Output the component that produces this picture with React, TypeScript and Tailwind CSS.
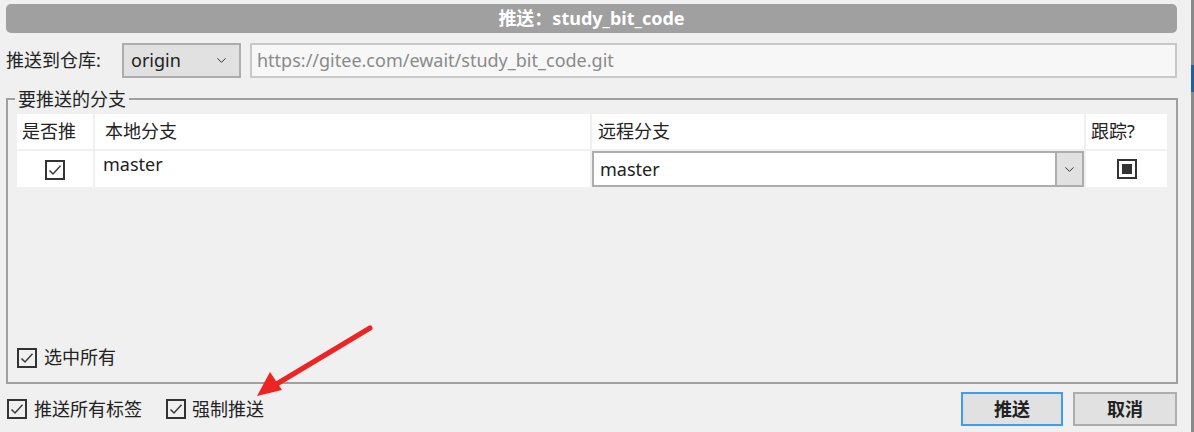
import { ChevronDown } from "lucide-react";

const FONT = "font-['Noto_Sans','Noto_Sans_CJK_SC',sans-serif]";

function CheckBox() {
  return (
    <span className="flex h-[20px] w-[20px] shrink-0 items-center justify-center border-2 border-[#333333]">
      <svg width="14" height="14" viewBox="0 0 14 14" fill="none">
        <path d="M1.5 7.5 L5 11 L12.5 2.8" stroke="#3a3a3a" strokeWidth="1.5" />
      </svg>
    </span>
  );
}

function TrackBox() {
  return (
    <span className="flex h-[20px] w-[20px] items-center justify-center border-2 border-[#333333] bg-white">
      <span className="h-[10px] w-[10px] bg-[#333333]" />
    </span>
  );
}

export default function App() {
  return (
    <div className={`relative flex h-[432px] w-[1194px] overflow-hidden bg-[#f0f0f0] text-[18px] text-[#222222] ${FONT}`}>
      <div className="flex w-[1191px] flex-col pl-[6px] pr-[14px] pt-[4px]">
        {/* title */}
        <div className="flex h-[29px] items-center justify-center rounded-[5px] bg-[#a0a0a0] text-[18px] font-bold text-white">
          推送：study_bit_code
        </div>

        {/* remote row */}
        <div className="mt-[9px] flex h-[36px] items-center">
          <span className="w-[116px] leading-none">推送到仓库:</span>
          <div className="flex h-[35px] w-[119px] items-center justify-between border-2 border-[#adadad] bg-[#e1e1e1] pl-[7px] pr-[10px]">
            <span>origin</span>
            <ChevronDown size={15} strokeWidth={1.6} className="text-[#333]" />
          </div>
          <div className="ml-[9px] flex h-[35px] flex-1 items-center border-2 border-[#c8c8c8] bg-[#f7f7f7] pl-[5px] text-[#8a8a8a]">
            https://gitee.com/ewait/study_bit_code.git
          </div>
        </div>

        {/* branches group */}
        <fieldset className="mt-[9px] mr-[-1px] border-2 border-[#a0a0a0] px-[9px]">
          <legend className="ml-[-2px] px-[3px] leading-[24px]">要推送的分支</legend>
          <div className="flex h-[271px] flex-col pb-[11px]">
            <div className="mt-[3px] grid grid-cols-[76px_495px_492px_81px] gap-x-[2px] gap-y-[2px] bg-[#f0f0f0]">
              <div className="flex h-[35px] items-center bg-white pl-[5px]">是否推</div>
              <div className="flex h-[35px] items-center bg-white pl-[10px]">本地分支</div>
              <div className="flex h-[35px] items-center bg-white pl-[6px]">远程分支</div>
              <div className="flex h-[35px] items-center bg-white pl-[5px]">跟踪?</div>

              <div className="flex h-[36px] items-center justify-center bg-white pt-[2px]">
                <CheckBox />
              </div>
              <div className="h-[36px] bg-white pl-[8px] pt-[3px] leading-[20px]">master</div>
              <div className="flex h-[36px] border-2 border-[#adadad] bg-white">
                <span className="flex flex-1 items-center pl-[6px]">master</span>
                <span className="flex w-[27px] items-center justify-center border-l-2 border-[#adadad] bg-[#e1e1e1]">
                  <ChevronDown size={15} strokeWidth={1.6} className="text-[#333]" />
                </span>
              </div>
              <div className="flex h-[36px] items-center justify-center bg-white">
                <TrackBox />
              </div>
            </div>
            <div className="flex-1" />
            <label className="flex items-center gap-[7px]">
              <CheckBox />
              <span>选中所有</span>
            </label>
          </div>
        </fieldset>

        {/* bottom row */}
        <div className="mt-[8px] flex items-center">
          <label className="flex items-center gap-[7px] pl-[1px]">
            <CheckBox />
            <span>推送所有标签</span>
          </label>
          <label className="ml-[24px] flex items-center gap-[6px]">
            <CheckBox />
            <span>强制推送</span>
          </label>
          <div className="flex-1" />
          <button className="flex h-[34px] w-[102px] items-center justify-center border-2 border-[#3c9cf6] bg-[#e1e1e1] font-bold">
            推送
          </button>
          <button className="ml-[10px] flex h-[34px] w-[104px] items-center justify-center border-2 border-[#adadad] bg-[#e1e1e1] font-bold">
            取消
          </button>
        </div>
      </div>

      {/* window edge */}
      <div className="flex w-[3px] flex-col bg-[#8a8a8a]">
        <div className="mt-[65px] h-[27px] bg-[#1f5ea8]" />
      </div>

      {/* annotation arrow */}
      <svg className="pointer-events-none absolute left-0 top-0" width="1194" height="432">
        <line x1="370" y1="328" x2="275" y2="385" stroke="#ee2424" strokeWidth="5" strokeLinecap="round" />
        <polygon points="257,396 270,372 282,390" fill="#ee2424" />
      </svg>
    </div>
  );
}
